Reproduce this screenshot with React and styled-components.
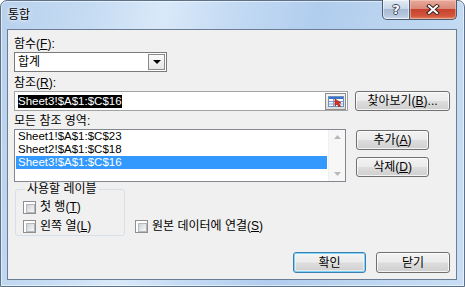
import React from "react"
import styled, { createGlobalStyle, css } from "styled-components"

const GlobalStyle = createGlobalStyle`
  html, body {
    margin: 0;
    padding: 0;
    background: #ffffff;
  }

  body {
    font-family: "Liberation Sans", "Noto Sans CJK KR", sans-serif;
    font-size: 12px;
    color: #000;
  }

  * {
    box-sizing: border-box;
  }

  u {
    text-underline-offset: 1px;
  }
`

const Window = styled.div`
  width: 465px;
  height: 287px;
  display: flex;
  flex-direction: column;
  padding: 0 7px 6px 6px;
  border: 1px solid #5d7189;
  border-radius: 7px 7px 0 0;
  background: linear-gradient(
    100deg,
    #b7d0ec 0%,
    #c6dcf3 18%,
    #d9e9f9 32%,
    #c3daf3 46%,
    #b1cdee 62%,
    #bcd5f0 80%,
    #c9def4 100%
  );
  box-shadow: inset 0 0 0 1px rgba(255, 255, 255, 0.55);
`

const TitleBar = styled.div`
  height: 28px;
  display: flex;
  justify-content: space-between;
  align-items: flex-start;
`

const Title = styled.div`
  padding: 7px 0 0 1px;
  font-size: 12px;
  line-height: 14px;
  text-shadow: 0 0 6px rgba(255, 255, 255, 0.95), 0 0 3px rgba(255, 255, 255, 0.9);
`

const CaptionButtons = styled.div`
  display: flex;
  margin-top: -1px;
`

const CaptionButton = styled.div`
  height: 20px;
  display: flex;
  align-items: center;
  justify-content: center;
  border: 1px solid #4b5b70;
  border-top: none;
  ${p =>
    p.$close
      ? css`
          width: 47px;
          border-left: none;
          border-radius: 0 0 5px 0;
          background: linear-gradient(#e9a99b 0%, #d98b7b 45%, #c7432f 50%, #d2563c 85%, #e48a6a 100%);
          box-shadow: inset 0 0 0 1px rgba(255, 220, 210, 0.45);
        `
      : css`
          width: 28px;
          border-radius: 0 0 0 5px;
          background: linear-gradient(#e3ebf5 0%, #cad7e7 45%, #a9bbd3 50%, #b6c8de 85%, #d6e3f1 100%);
          box-shadow: inset 0 0 0 1px rgba(255, 255, 255, 0.5);
        `}
`

const HelpGlyph = styled.span`
  font-family: "DejaVu Sans", sans-serif;
  font-weight: bold;
  font-size: 13px;
  line-height: 14px;
  color: #fff;
  text-shadow: 1px 0 0 #3c4858, -1px 0 0 #3c4858, 0 1px 0 #3c4858, 0 -1px 0 #3c4858;
`

const Client = styled.div`
  flex: 1;
  display: flex;
  flex-direction: column;
  background: #f0f0f0;
  border: 1px solid #6b7d94;
  padding: 6px 6px 6px 6px;
`

const Label = styled.div`
  height: 16px;
  line-height: 16px;
  margin-top: ${p => p.$mt || 0}px;
  white-space: nowrap;
`

const Combo = styled.div`
  width: 153px;
  height: 20px;
  display: flex;
  align-items: center;
  background: #fff;
  border: 1px solid #7a7a7a;
  padding: 0 1px 0 3px;
`

const ComboValue = styled.span`
  flex: 1;
  line-height: 14px;
`

const DropButton = styled.div`
  width: 17px;
  height: 16px;
  display: flex;
  align-items: center;
  justify-content: center;
  border: 1px solid #8a8a8a;
  background: linear-gradient(#fbfbfb, #e6e6e6);
`

const Arrow = styled.span`
  width: 0;
  height: 0;
  border-left: 4px solid transparent;
  border-right: 4px solid transparent;
  border-top: 4px solid #000;
`

const Row = styled.div`
  display: flex;
  align-items: ${p => p.$align || "flex-start"};
  gap: ${p => p.$gap || 0}px;
  margin-top: ${p => p.$mt || 0}px;
`

const RefEdit = styled.div`
  width: 334px;
  height: 20px;
  display: flex;
  align-items: center;
  background: #fff;
  border: 1px solid #a3a3a3;
  padding: 0 1px 0 3px;
`

const SelText = styled.span`
  background: #000;
  color: #fff;
  font-size: 11.5px;
  line-height: 13px;
`

const RefPick = styled.div`
  margin-left: auto;
  width: 21px;
  height: 17px;
  display: flex;
  align-items: center;
  justify-content: center;
  border: 1px solid #8c8c8c;
  background: linear-gradient(#f4f4f4, #dedede);
`

const Button = styled.button`
  width: ${p => p.$w}px;
  height: ${p => p.$h || 20}px;
  padding: 0;
  font: inherit;
  line-height: 14px;
  color: #000;
  border: 1px solid #707070;
  border-radius: 3px;
  background: linear-gradient(#f2f2f2 0%, #ebebeb 48%, #dddddd 52%, #cfcfcf 100%);
  box-shadow: inset 0 0 0 1px rgba(255, 255, 255, 0.75);
  ${p =>
    p.$default &&
    css`
      border-color: #3c7fb1;
      box-shadow: inset 0 0 0 1px #7fd0f5, inset 0 0 0 2px rgba(255, 255, 255, 0.5);
    `}
`

const ListBox = styled.div`
  width: 332px;
  height: 53px;
  display: flex;
  background: #fff;
  border: 1px solid #828790;
`

const ListItems = styled.div`
  flex: 1;
  padding: 0 1px;
`

const ListItem = styled.div`
  height: 13px;
  line-height: 13px;
  padding-left: 2px;
  font-size: 11.5px;
  white-space: nowrap;
  ${p =>
    p.$selected &&
    css`
      background: #3399ff;
      color: #fff;
    `}
`

const ScrollBar = styled.div`
  width: 17px;
  display: flex;
  flex-direction: column;
  justify-content: space-between;
  align-items: center;
  padding: 5px 0;
  background: #f7f7f7;
  border-left: 1px solid #f0f0f0;
`

const ListButtons = styled.div`
  display: flex;
  flex-direction: column;
  gap: 7px;
  margin: 1px 0 0 10px;
`

const Group = styled.fieldset`
  width: 110px;
  margin: 0 0 0 1px;
  padding: 5px 0 2px 7px;
  border: 1px solid #d5dfe5;
  border-radius: 3px;
  display: flex;
  flex-direction: column;
  gap: 6px;
`

const Legend = styled.legend`
  margin-left: 2px;
  padding: 0 2px;
  line-height: 14px;
`

const CheckRow = styled.label`
  display: flex;
  align-items: center;
  gap: 4px;
  height: 13px;
  line-height: 13px;
  white-space: nowrap;
  margin: ${p => p.$m || "0"};
`

const CheckText = styled.span`
  white-space: nowrap;
`

const CheckBox = styled.span`
  width: 13px;
  height: 13px;
  flex: none;
  border: 1px solid #8e8f8f;
  background: #fff;
  padding: 2px;

  &::after {
    content: "";
    display: block;
    width: 7px;
    height: 7px;
    border: 1px solid #b4b8bd;
    background: linear-gradient(135deg, #cfd3d8 0%, #e6e8ea 55%, #f6f6f6 100%);
  }
`

const Footer = styled.div`
  margin-top: auto;
  display: flex;
  justify-content: flex-end;
  gap: 10px;
`

const CloseIcon = () => (
  <svg width="14" height="11" viewBox="0 0 14 11">
    <path d="M3 2 L11 9 M11 2 L3 9" stroke="#3b2320" strokeWidth="4" strokeLinecap="square" />
    <path d="M3 2 L11 9 M11 2 L3 9" stroke="#ffffff" strokeWidth="2" strokeLinecap="square" />
  </svg>
)

const PickIcon = () => (
  <svg width="16" height="11" viewBox="0 0 16 11">
    <rect x="0.5" y="0.5" width="15" height="10" fill="#ffffff" stroke="#6f8fbf" />
    <rect x="1" y="1" width="14" height="2" fill="#3a74c8" />
    <path d="M1 5.5 H15 M1 8 H15 M5.5 3 V10" stroke="#7aa0d8" strokeWidth="1" />
    <path d="M7 3 L7 10 L9 8 L11 11 L12.5 10 L10.5 7 L13 7 Z" fill="#e0301e" stroke="#8a1a10" strokeWidth="0.6" />
  </svg>
)

const ScrollArrow = ({ down }) => (
  <svg width="7" height="4" viewBox="0 0 7 4">
    <path d={down ? "M0 0 H7 L3.5 4 Z" : "M0 4 H7 L3.5 0 Z"} fill="#b8b8b8" />
  </svg>
)

const refs = ["Sheet1!$A$1:$C$23", "Sheet2!$A$1:$C$18", "Sheet3!$A$1:$C$16"]

const App = () => (
  <>
    <GlobalStyle />
    <Window>
      <TitleBar>
        <Title>통합</Title>
        <CaptionButtons>
          <CaptionButton>
            <HelpGlyph>?</HelpGlyph>
          </CaptionButton>
          <CaptionButton $close>
            <CloseIcon />
          </CaptionButton>
        </CaptionButtons>
      </TitleBar>
      <Client>
        <Label>
          함수(<u>F</u>):
        </Label>
        <Combo>
          <ComboValue>합계</ComboValue>
          <DropButton>
            <Arrow />
          </DropButton>
        </Combo>
        <Label $mt={3}>
          참조(<u>R</u>):
        </Label>
        <Row $gap={7}>
          <RefEdit>
            <SelText>Sheet3!$A$1:$C$16</SelText>
            <RefPick>
              <PickIcon />
            </RefPick>
          </RefEdit>
          <Button $w={95}>
            찾아보기(<u>B</u>)...
          </Button>
        </Row>
        <Label $mt={2}>모든 참조 영역:</Label>
        <Row>
          <ListBox>
            <ListItems>
              {refs.map((r, i) => (
                <ListItem key={r} $selected={i === 2}>
                  {r}
                </ListItem>
              ))}
            </ListItems>
            <ScrollBar>
              <ScrollArrow />
              <ScrollArrow down />
            </ScrollBar>
          </ListBox>
          <ListButtons>
            <Button $w={73}>
              추가(<u>A</u>)
            </Button>
            <Button $w={73}>
              삭제(<u>D</u>)
            </Button>
          </ListButtons>
        </Row>
        <Row>
          <Group>
            <Legend>사용할 레이블</Legend>
            <CheckRow>
              <CheckBox />
              <CheckText>
                첫 행(<u>T</u>)
              </CheckText>
            </CheckRow>
            <CheckRow>
              <CheckBox />
              <CheckText>
                왼쪽 열(<u>L</u>)
              </CheckText>
            </CheckRow>
          </Group>
          <CheckRow $m="auto 0 3px 10px">
            <CheckBox />
            <CheckText>
              원본 데이터에 연결(<u>S</u>)
            </CheckText>
          </CheckRow>
        </Row>
        <Footer>
          <Button $w={73} $h={21} $default>
            확인
          </Button>
          <Button $w={74} $h={21}>
            닫기
          </Button>
        </Footer>
      </Client>
    </Window>
  </>
)

export default App
